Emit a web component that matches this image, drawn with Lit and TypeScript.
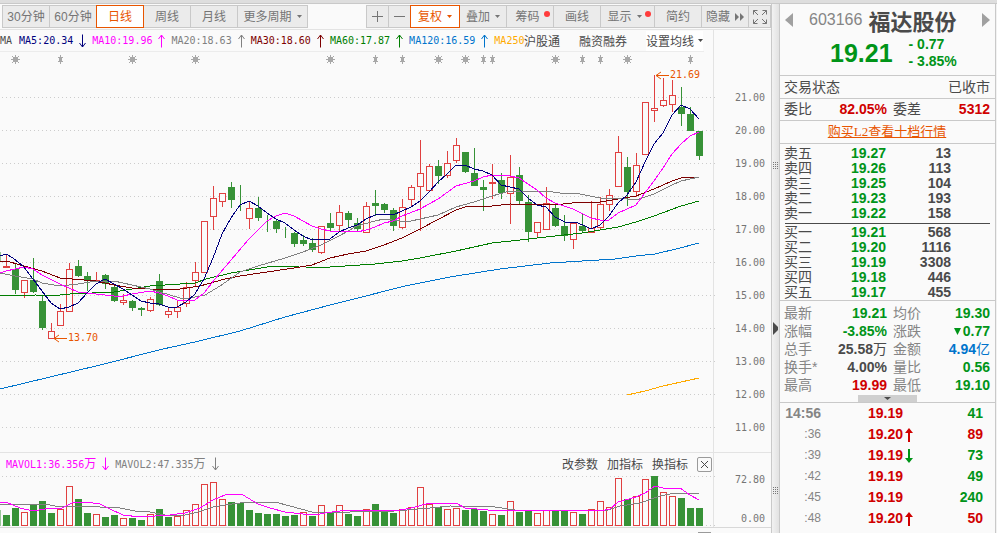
import { LitElement, html, svg, css } from "lit";
import { customElement } from "lit/decorators.js";
import { classMap } from "lit/directives/class-map.js";

type Bar = [string, number, number, number, number];

/* colour, high, body top, body bottom, low (one entry per trading day, 9 units apart) */
const BARS: Bar[] = [
  ["r", 255, 266, 268, 268], ["g", 264, 269, 290, 294], ["r", 280, 280, 293, 298], ["g", 258, 280, 292, 293],
  ["g", 296, 301, 328, 330], ["r", 323, 331, 339, 339], ["r", 304, 311, 326, 326], ["r", 263, 269, 312, 312],
  ["g", 260, 266, 276, 277], ["g", 272, 276, 281, 291], ["r", 272, 280, 282, 282], ["g", 274, 275, 284, 289],
  ["g", 286, 287, 301, 302], ["r", 294, 300, 303, 305], ["g", 300, 301, 308, 311], ["g", 307, 308, 310, 316],
  ["r", 297, 299, 311, 312], ["g", 274, 281, 305, 306], ["r", 307, 311, 315, 318], ["r", 301, 307, 312, 318],
  ["r", 282, 287, 304, 307], ["r", 262, 272, 281, 286], ["r", 221, 221, 273, 273], ["r", 186, 198, 217, 230],
  ["r", 193, 193, 202, 207], ["g", 182, 187, 200, 208], ["g", 185, 207, 208, 211], ["r", 202, 208, 219, 229],
  ["g", 197, 208, 218, 221], ["g", 215, 224, 225, 232], ["g", 220, 221, 229, 233], ["g", 227, 232, 233, 238],
  ["g", 232, 233, 244, 247], ["g", 235, 240, 244, 246], ["g", 238, 243, 250, 252], ["r", 226, 226, 253, 254],
  ["g", 213, 223, 228, 232], ["r", 205, 212, 226, 232], ["g", 211, 213, 220, 228], ["g", 218, 223, 229, 231],
  ["r", 202, 206, 233, 233], ["g", 190, 203, 206, 216], ["g", 203, 204, 210, 213], ["g", 208, 210, 226, 231],
  ["r", 199, 207, 228, 229], ["r", 185, 187, 200, 206], ["r", 140, 173, 187, 231], ["r", 164, 166, 191, 191],
  ["g", 160, 166, 176, 184], ["r", 151, 163, 176, 178], ["r", 138, 145, 161, 163], ["g", 152, 152, 172, 173],
  ["g", 148, 173, 186, 186], ["g", 180, 187, 190, 211], ["r", 164, 182, 183, 199], ["g", 173, 180, 193, 199],
  ["r", 155, 177, 194, 224], ["g", 167, 175, 201, 204], ["g", 195, 202, 232, 242], ["r", 222, 222, 233, 237],
  ["r", 187, 203, 230, 230], ["g", 205, 208, 226, 227], ["g", 215, 226, 236, 241], ["r", 223, 223, 240, 249],
  ["g", 214, 226, 231, 232], ["r", 201, 228, 233, 233], ["r", 197, 204, 228, 230], ["r", 189, 195, 205, 211],
  ["r", 136, 152, 187, 187], ["g", 157, 167, 192, 206], ["r", 153, 165, 192, 197], ["r", 102, 102, 155, 155],
  ["r", 75, 108, 111, 122], ["r", 78, 100, 106, 107], ["r", 80, 95, 105, 112], ["g", 87, 107, 114, 126],
  ["g", 107, 114, 131, 131], ["g", 131, 131, 156, 160],
];

const VOLUMES =
  "g515 g508 r512 g505 g501 g513 r509 r486 g499 g513 r514 g517 g515 r518 g518 g520 r514 g509 g517 r516 " +
  "r510 r504 r484 r482 r499 g502 g503 g510 g513 g514 g514 g516 g515 r512 g516 r505 g513 r505 g514 g516 " +
  "r509 g504 g511 g513 r509 r507 r487 r504 g507 r509 r508 g510 g509 g511 r514 g515 r501 g512 g511 r513 " +
  "r510 g511 g511 r512 g514 r509 r501 r507 r478 g499 r496 r479 g476 r492 r496 g498 g508 g508";

const AVERAGES: [string, string][] = [
  ["blue", "0,389 50,377 100,365 163,349 195,342 240,331 285,317 330,305 350,300 405,286 450,277 500,269 550,263 615,259 636,256 655,254 676,249 699,243"],
  ["green", "0,296 36,295 50,296 70,294 114,292 150,286 195,283 206,279 231,273 267,267 300,266 312,268 330,267 375,264 402,261 420,258 456,251 492,243 520,240 555,236 582,233 618,227 636,222 654,216 681,206 699,201"],
  ["maroon", "0,261 10,262 24,266 42,271 60,278 96,281 114,285 132,288 150,289 180,289 200,286 225,279 240,276 267,272 294,268 312,265 330,258 348,254 366,251 384,245 402,238 420,229 456,210 465,207 492,206 510,204 555,205 580,202 600,202 618,199 636,196 654,189 672,181 681,178 699,177"],
  ["gray", "0,273 15,276 33,279 42,283 60,286 78,284 96,281 114,281 132,285 150,289 160,292 180,298 190,298 205,295 220,286 230,279 240,272 258,266 285,258 303,252 321,245 339,236 357,226 375,221 384,219 400,221 411,221 420,219 438,215 447,211 456,207 474,202 492,196 510,191 546,191 560,193 580,194 600,198 618,198 636,200 654,194 672,185 681,181 699,177"],
  ["pink", "0,273 6,271 24,267 33,269 42,275 60,284 78,292 96,294 114,296 123,296 132,294 150,291 159,293 168,296 177,300 186,301 195,300 204,293 215,279 231,260 249,239 267,221 276,216 285,213 294,216 303,221 312,226 321,229 330,231 357,232 366,230 375,227 384,223 393,221 402,216 420,209 438,199 456,186 474,181 483,177 492,175 510,176 519,178 528,184 537,190 546,198 555,203 573,209 583,214 591,218 600,220 609,220 618,213 627,209 636,205 645,193 654,181 663,168 672,154 681,144 690,136 699,132"],
  ["navy", "0,256 6,254 13,258 24,267 33,279 42,291 51,303 60,309 69,307 78,303 87,293 96,284 105,279 114,284 123,289 132,295 141,301 150,303 159,304 168,307 177,307 186,302 195,294 204,279 213,258 222,234 231,218 240,205 249,201 258,206 267,213 276,219 285,223 294,230 303,236 312,240 330,239 339,232 348,228 357,225 366,219 375,215 384,214 393,215 402,211 411,207 420,201 429,192 438,182 447,174 456,165 465,165 474,169 483,171 492,175 501,185 510,187 519,189 528,198 537,205 546,207 555,217 567,223 575,222 583,225 591,229 600,225 609,216 618,203 627,195 636,182 645,162 654,144 663,133 672,115 681,105 690,109 699,119"],
  ["orange", "627,395 645,391 663,386 681,382 699,378"],
];

const VOLUME_AVERAGES: [string, string][] = [
  ["gray", "0,505 20,504 50,505 60,507 85,506 100,507 120,508 135,511 150,512 165,515 185,515 198,512 213,507 225,505 240,503 258,502 275,502 290,506 312,512 350,512 395,511 430,508 450,506 495,507 515,510 590,511 608,510 620,506 640,503 660,496 675,493 699,493"],
  ["pink", "0,502 8,503 20,508 33,511 45,509 62,508 72,503 85,502 100,504 110,509 123,515 140,517 155,516 170,515 185,513 200,508 213,500 225,495 235,494 243,495 258,504 270,508 285,512 303,514 315,515 325,513 340,511 363,510 395,511 411,508 430,503 456,503 465,508 500,511 520,510 560,510 600,511 610,509 618,502 636,497 645,493 655,486 663,488 680,488 690,495 699,500"],
];

const STARS = [15, 132, 195, 330, 438, 465, 555, 627];
const PAIRS = [60, 375, 402, 483, 492, 582, 600, 690];
const centre = (i: number) => 6 + i * 9;

const arrow = (up: boolean) => html`<svg class="arrow" viewBox="0 0 9 14" width="9" height="14" aria-hidden="true">
  <path d=${up ? "M4.5 13.5V1M4.5 1L1.5 5M4.5 1L7.5 5" : "M4.5 .5V13M4.5 13L1.5 9M4.5 13L7.5 9"} />
</svg>`;

const caret = html`<svg class="caret" viewBox="0 0 5 3" width="5" height="3" aria-hidden="true"><path d="M0 0H5L2.5 3Z" /></svg>`;

@customElement("kline-toolbar")
class KlineToolbar extends LitElement {
  static styles = css`
    :host { display: flex; justify-content: space-between; height: 24px; padding: 1px 0 0 3px;
      border-bottom: 1px solid #e3e3e3; background: #fafafa; }
    .group { display: flex; }
    .tool { box-sizing: border-box; height: 23px; width: 48px; margin: 0 0 0 -1px; padding: 0; border: 1px solid #c9c9c9;
      background: #ebebeb; color: #757575; font: 12px/20px "Liberation Sans", "Noto Sans CJK SC", sans-serif;
      display: flex; align-items: center; justify-content: center; gap: 5px; white-space: nowrap; position: relative; }
    .active { border-color: #e85500; background: #fff; color: #e85500; z-index: 1; }
    .narrow { width: 23px; }
    .medium { width: 50px; }
    .wide { width: 55px; }
    .menu { width: 71px; }
    .caret, .solid { fill: currentColor; }
    .line { fill: none; stroke: currentColor; }
    .dot { position: absolute; right: 3px; top: 5px; width: 6px; height: 6px; border-radius: 3px; background: #ff3c3c; }
    .wide { padding-right: 6px; }
  `;
  tool(label: unknown, extra = "", opts: { active?: boolean; caret?: boolean; dot?: boolean } = {}) {
    return html`<button class=${classMap({ tool: true, active: !!opts.active, [extra || "plain"]: true })}>
      ${label}${opts.caret ? caret : ""}${opts.dot ? html`<span class="dot"></span>` : ""}
    </button>`;
  }
  render() {
    const plus = html`<svg class="line" viewBox="0 0 11 11" width="11" height="11" role="img" aria-label="+"><path d="M0 5.5H11M5.5 0V11" /></svg>`;
    const minus = html`<svg class="line" viewBox="0 0 11 11" width="11" height="11" role="img" aria-label="-"><path d="M0 5.5H11" /></svg>`;
    const forward = html`<svg class="solid" viewBox="0 0 9 8" width="9" height="8" aria-hidden="true"><path d="M0 0L4 4L0 8ZM5 0L9 4L5 8Z" /></svg>`;
    const expand = html`<svg class="line" viewBox="0 0 14 14" width="14" height="14" role="img" aria-label="expand">
      <path d="M.5 4.5V.5H4.5M9.5 .5H13.5V4.5M13.5 9.5V13.5H9.5M4.5 13.5H.5V9.5M.5 .5L5 5M13.5 .5L9 5M13.5 13.5L9 9M.5 13.5L5 9" /></svg>`;
    return html`
      <div class="group">
        ${this.tool("30分钟")}${this.tool("60分钟")}${this.tool("日线", "", { active: true })}
        ${this.tool("周线")}${this.tool("月线")}${this.tool("更多周期", "menu", { caret: true })}
      </div>
      <div class="group">
        ${this.tool(plus, "narrow")}${this.tool(minus, "narrow")}
        ${this.tool("复权", "medium", { active: true, caret: true })}${this.tool("叠加", "", { caret: true })}
        ${this.tool("筹码", "", { dot: true })}${this.tool("画线")}
        ${this.tool("显示", "wide", { caret: true, dot: true })}${this.tool("简约")}
        ${this.tool(html`隐藏${forward}`)}${this.tool(expand, "narrow")}
      </div>`;
  }
}

@customElement("kline-chart")
class KlineChart extends LitElement {
  static styles = css`
    :host { display: block; background: #fafafa; font: 12px/20px "DejaVu Sans Mono", "Noto Sans CJK SC", monospace; color: #4a4a4a; }
    .row { display: grid; grid-template-columns: minmax(0, 1fr) 58px; height: 22px; }
    .row::after { content: ""; border-left: 1px solid #e3e3e3; }
    .legend { display: flex; align-items: center; border-bottom: 1px solid #ececec; margin-right: 9px; }
    .list { display: flex; flex: 1; align-items: center; gap: 5px; min-width: 0; overflow: hidden; white-space: nowrap; }
    .mono { font-size: 10px; flex: none; }
    .lead { margin-right: 2px; }
    .han { font-size: 12px; }
    .volume { padding-left: 6px; margin-right: 1px; display: flex; align-items: center; }
    .links { display: flex; gap: 19px; align-items: center; font-family: "Noto Sans CJK SC", sans-serif; }
    .legend .links { padding-right: 1px; }
    .volume .links { gap: 9px; }
    .links a { color: #4a4a4a; text-decoration: none; white-space: nowrap; }
    .links .setting { display: flex; align-items: center; gap: 4px; background: #fff; }
    .caret { fill: #4a4a4a; }
    .arrow { display: block; fill: none; stroke: currentColor; }
    .close { width: 15px; height: 15px; padding: 0; border: 1px solid #9a9a9a; border-radius: 2px; background: #fafafa;
      box-sizing: border-box; display: flex; align-items: center; justify-content: center; }
    .close path { stroke: #4a4a4a; fill: none; }
    .plot { display: block; width: 100%; height: auto; }
    .split { border-top: 1px solid #e3e3e3; }
    .tabs { display: flex; justify-content: flex-end; height: 5px; border-top: 1px solid #d8d8d8; padding-right: 60px; }
    .tab { width: 13px; margin-top: 4px; border-top: 1px solid #9a9a9a; }
    .grid { stroke: #cccccc; stroke-dasharray: 1 3; }
    .edge { stroke: #e3e3e3; }
    .r { stroke: #e04040; fill: #fafafa; }
    .g { stroke: #379237; fill: #379237; }
    .ma { fill: none; shape-rendering: crispEdges; }
    .sblue { stroke: #0074cc; } .sgreen { stroke: #007d00; } .smaroon { stroke: #7d0000; } .sgray { stroke: #808080; }
    .spink { stroke: #ff00ff; } .snavy { stroke: #00007d; } .sorange { stroke: #ffaa00; }
    .blue { color: #0074cc; } .green { color: #007d00; } .maroon { color: #7d0000; } .gray { color: #808080; }
    .pink { color: #ff00ff; } .navy { color: #00007d; } .orange { color: #ffaa00; }
    .axis { font-size: 10px; fill: #757575; }
    .note { font-size: 10px; fill: #e85500; }
    .pointer { stroke: #e85500; fill: none; }
    .mark { stroke: #a8a8a8; fill: #a8a8a8; }
  `;
  average([name, points]: [string, string]) {
    return svg`<polyline class="ma s${name}" points=${points} />`;
  }
  candle([tone, high, top, bottom, low]: Bar, i: number) {
    const x = centre(i);
    const height = Math.max(bottom - top - 1, tone === "r" ? 1 : 0);
    return svg`<g class=${tone}><path d="M${x + 0.5} ${high}V${low}" />
      <rect x=${x - 2.5} y=${top + 0.5} width="6" height=${height} /></g>`;
  }
  volume(entry: string, i: number) {
    const top = Number(entry.slice(1));
    return svg`<rect class=${entry[0]} x=${centre(i) - 2.5} y=${top + 0.5} width="6" height=${525 - top} />`;
  }
  render() {
    const levels = Array.from({ length: 11 }, (_, i) => ({ y: 97 + i * 33, label: (21 - i).toFixed(2) }));
    const legend: [string, string, boolean][] = [
      ["navy", "MA5:20.34", false], ["pink", "MA10:19.96", true], ["gray", "MA20:18.63", true],
      ["maroon", "MA30:18.60", true], ["green", "MA60:17.87", true], ["blue", "MA120:16.59", true],
    ];
    return html`
      <div class="row">
        <div class="legend">
          <div class="list">
            <span class="mono lead">MA</span>
            ${legend.map(([c, t, up]) => html`<span class="mono ${c}">${t}</span><span class="mono ${c}">${arrow(up)}</span>`)}
            <span class="mono orange">MA250</span>
          </div>
          <nav class="links">
            <a href="#hgt">沪股通</a><a href="#margin">融资融券</a><a class="setting" href="#ma">设置均线${caret}</a>
          </nav>
        </div>
      </div>
      <svg class="plot" viewBox="0 52 771 400" role="img" aria-label="K">
        ${levels.map((l) => svg`<path class="grid" d="M2 ${l.y + 0.5}H716" />
          <text class="axis" x="735" y=${l.y + 4}>${l.label}</text>`)}
        <path class="edge" d="M713.5 52V452" />
        ${STARS.map((x) => svg`<g class="mark"><rect x=${x - 1.5} y="57.5" width="4" height="4" />
          <path d="M${x + 0.5} 55V64M${x - 4} 59.5H${x + 5}M${x - 3} 56L${x + 4} 63M${x + 4} 56L${x - 3} 63" /></g>`)}
        ${PAIRS.map((x) => svg`<g class="mark"><rect x=${x - 0.5} y="57.5" width="2" height="4" />
          <path d="M${x + 0.5} 55V64M${x - 2} 57.5H${x + 3}M${x - 2} 61.5H${x + 3}" /></g>`)}
        <rect class="g" x="-2" y="252.5" width="2" height="8" />
        ${BARS.map((b, i) => this.candle(b, i))}
        ${AVERAGES.map((a) => this.average(a))}
        <path class="pointer" d="M54 338.5H67M54 338.5L59 335M54 338.5L59 342M656 75.5H669M656 75.5L661 72M656 75.5L661 79" />
        <text class="note" x="68" y="341">13.70</text>
        <text class="note" x="670" y="78">21.69</text>
      </svg>
      <div class="row split">
        <div class="volume">
          <div class="list">
            <span class="mono pink">MAVOL1:36.356<span class="han">万</span></span><span class="pink mono">${arrow(false)}</span>
            <span class="mono gray">MAVOL2:47.335<span class="han">万</span></span><span class="gray mono">${arrow(false)}</span>
          </div>
          <nav class="links">
            <a href="#edit">改参数</a><a href="#add">加指标</a><a href="#swap">换指标</a>
            <button class="close" aria-label="close"><svg viewBox="0 0 9 9" width="9" height="9"><path d="M1 1L8 8M8 1L1 8" /></svg></button>
          </nav>
        </div>
      </div>
      <svg class="plot" viewBox="0 475 771 52" role="img" aria-label="VOL">
        <path class="grid" d="M2 476.5H716M2 525.5H716" />
        <path class="edge" d="M713.5 475V527" />
        <rect class="g" x="-2" y="510.5" width="2" height="15" />
        ${VOLUMES.split(" ").map((v, i) => this.volume(v, i))}
        ${VOLUME_AVERAGES.map((a) => this.average(a))}
        <text class="axis" x="735" y="483">72.80</text>
        <text class="axis" x="741" y="522">0.00</text>
      </svg>
      <div class="tabs"><span class="tab"></span></div>`;
  }
}

@customElement("quote-panel")
class QuotePanel extends LitElement {
  static styles = css`
    :host { display: block; border: solid #c9c9c9; border-width: 0 1px; background: #fafafa; color: #4a4a4a;
      font: 14px/15px "Liberation Sans", "Noto Sans CJK SC", sans-serif; }
    .head { display: grid; grid-template-columns: 24px 1fr 24px; align-items: center; padding: 0 5px; height: 32px; }
    .step { border: 0; padding: 0; background: none; display: flex; fill: #a0a0a0; }
    .step:last-child { justify-content: flex-end; }
    .name { display: flex; gap: 6px; align-items: center; white-space: nowrap; }
    .code { font-size: 16px; line-height: 24px; color: #858585; }
    .title { font-size: 22px; line-height: 26px; font-weight: 700; font-family: "Noto Sans CJK SC", sans-serif; }
    .price { box-sizing: border-box; display: flex; gap: 16px; align-items: center; height: 39px; padding: 0 0 6px 50px; color: #009418; font-weight: 700; }
    .last { font-size: 25px; line-height: 32px; }
    .change { line-height: 17px; }
    .line { display: flex; align-items: center; justify-content: space-between; height: 22px; padding: 0 5px 0 4px; border-top: 1px solid #c9c9c9; }
    .promo { justify-content: center; font: 13px/20px "Liberation Serif", "Noto Sans CJK SC", serif; }
    .promo a { color: #e85500; }
    .table { table-layout: fixed; border-collapse: collapse; width: 100%; }
    .table th, .table td { padding: 0; text-align: right; font-weight: 700; white-space: nowrap; overflow: visible; }
    .table th { text-align: left; padding-left: 4px; font-weight: 400; }
    .sum { border-top: 1px solid #c9c9c9; line-height: 21px; }
    .sum tr { height: 21px; }
    .book { padding: 2px 0 0; border-top: 1px solid #c9c9c9; }
    .book tr { height: 15px; }
    .rule { border: 0; border-top: 1px solid #4a4a4a; margin: 2px 5px 1px; }
    .c1 { width: 40px; } .c2 { width: 66px; } .c3 { width: 65px; }
    .stats { border-top: 1px solid #c9c9c9; padding-top: 3px; line-height: 18px; }
    .stats tr { height: 18px; }
    .stats th { color: #858585; }
    .table td + th { padding-left: 6px; }
    .stats td:last-child, .sum td:last-child { padding-right: 5px; }
    .s1 { width: 44px; } .s2 { width: 63px; } .s3 { width: 47px; }
    .handle { display: flex; align-items: center; justify-content: center; width: 59px; height: 7px; margin: 1px auto 0; padding: 0; border: 0; background: #cfcfcf; }
    .handle path { fill: #4a4a4a; }
    .ticks { border-top: 1px solid #c9c9c9; line-height: 21px; }
    .ticks tr { height: 21px; }
    .ticks td:first-child { color: #858585; font-size: 12px; font-weight: 400; }
    .ticks .hour td:first-child { font-size: 14px; font-weight: 700; }
    .t1 { width: 41px; } .t2 { width: 82px; } .t3 { width: 12px; } .t4 { width: 68px; }
    .shaft { display: block; margin-left: 2px; fill: currentColor; }
    .fall { fill: currentColor; margin-right: 2px; vertical-align: 1px; }
    .table .up { color: #d00000; }
    .table .down { color: #009418; }
    .table .money { color: #0074cc; }
    .unit { font-weight: 400; }
  `;
  shaft(up: boolean) {
    return html`<svg class="shaft" viewBox="0 0 8 14" width="8" height="14" role="img" aria-label=${up ? "up" : "down"}>
      <path d=${up ? "M4 0L8 5H5V14H3V5H0Z" : "M4 14L8 9H5V0H3V9H0Z"} /></svg>`;
  }
  book(rows: [string, string, string][]) {
    return html`<table class="table"><colgroup><col class="c1"><col class="c2"><col class="c3"><col></colgroup>
      ${rows.map(([l, p, n]) => html`<tr><th scope="row">${l}</th><td class="down">${p}</td><td>${n}</td><td></td></tr>`)}</table>`;
  }
  pairs(rows: [string, unknown, string, string, unknown, string][], extra = "") {
    return html`<table class="table ${extra}"><colgroup><col class="s1"><col class="s2"><col class="s3"><col></colgroup>
      ${rows.map(([a, b, bc, c, d, dc]) => html`<tr><th scope="row">${a}</th><td class=${bc}>${b}</td><th scope="row">${c}</th><td class=${dc}>${d}</td></tr>`)}
    </table>`;
  }
  render() {
    const unit = (t: string) => html`<span class="unit">${t}</span>`;
    const fall = html`<svg class="fall" viewBox="0 0 7 7" width="7" height="7" aria-hidden="true"><path d="M0 0H7L3.5 7Z" /></svg>`;
    const ticks: [string, string, boolean | null, string, string][] = [
      ["14:56", "19.19", null, "41", "down"], [":36", "19.20", true, "89", "up"], [":39", "19.19", false, "73", "down"],
      [":42", "19.19", null, "49", "down"], [":45", "19.19", null, "240", "down"], [":48", "19.20", true, "50", "up"],
    ];
    return html`
      <header class="head">
        <button class="step" aria-label="previous"><svg viewBox="0 0 8 14" width="8" height="14"><path d="M8 0V14L0 7Z" /></svg></button>
        <div class="name"><span class="code">603166</span><span class="title">福达股份</span></div>
        <button class="step" aria-label="next"><svg viewBox="0 0 8 14" width="8" height="14"><path d="M0 0V14L8 7Z" /></svg></button>
      </header>
      <div class="price"><span class="last">19.21</span><span class="change">- 0.77<br>- 3.85%</span></div>
      <div class="line"><span>交易状态</span><span>已收市</span></div>
      ${this.pairs([["委比", "82.05%", "up", "委差", "5312", "up"]], "sum")}
      <div class="line promo"><a href="#l2">购买L2查看十档行情</a></div>
      <section class="book">
        ${this.book([["卖五", "19.27", "13"], ["卖四", "19.26", "113"], ["卖三", "19.25", "104"], ["卖二", "19.23", "193"], ["卖一", "19.22", "158"]])}
        <hr class="rule">
        ${this.book([["买一", "19.21", "568"], ["买二", "19.20", "1116"], ["买三", "19.19", "3308"], ["买四", "19.18", "446"], ["买五", "19.17", "455"]])}
      </section>
      <section class="stats">
        ${this.pairs([
          ["最新", "19.21", "down", "均价", "19.30", "down"],
          ["涨幅", "-3.85%", "down", "涨跌", html`${fall}0.77`, "down"],
          ["总手", html`25.58${unit("万")}`, "", "金额", html`4.94${unit("亿")}`, "money"],
          ["换手*", "4.00%", "", "量比", "0.56", "down"],
          ["最高", "19.99", "up", "最低", "19.10", "down"],
        ])}
        <button class="handle" aria-label="more"><svg viewBox="0 0 7 3" width="7" height="3"><path d="M0 0H7L3.5 3Z" /></svg></button>
      </section>
      <section class="ticks">
        <table class="table"><colgroup><col class="t1"><col class="t2"><col class="t3"><col class="t4"><col></colgroup>
          ${ticks.map(([t, p, dir, n, c], i) => html`<tr class=${i === 0 ? "hour" : "second"}><td>${t}</td><td class="up">${p}</td>
            <td class=${dir ? "up" : "down"}>${dir === null ? "" : this.shaft(dir)}</td><td class=${c}>${n}</td><td></td></tr>`)}
        </table>
      </section>`;
  }
}

@customElement("app-root")
class AppRoot extends LitElement {
  static styles = css`
    :host { display: block; min-height: 100vh; background: #fafafa; overflow: hidden; }
    .bar { height: 4px; box-sizing: border-box; background: #dedede; border-bottom: 1px solid #c9c9c9; }
    .desk { display: grid; grid-template-columns: minmax(0, 1fr) 8px 217px 1px; min-height: calc(100vh - 4px); }
    .splitter { background: linear-gradient(90deg, #c9c9c9 1px, #f2f2f2 1px, #e2e2e2); display: flex; flex-direction: column;
      align-items: center; justify-content: space-between; padding: 158px 0 39px; box-sizing: border-box; }
    .grip { stroke: #777; stroke-dasharray: 1 1; display: block; }
    .fold { fill: #4a4a4a; display: block; }
    .gutter { background: #f2f2f2; }
  `;
  render() {
    const grip = html`<svg class="grip" viewBox="0 0 5 7" width="5" height="7" aria-hidden="true">
      <path d="M0 .5H5M0 2.5H5M0 4.5H5M0 6.5H5" /></svg>`;
    return html`
      <div class="bar"></div>
      <main class="desk">
        <div class="market"><kline-toolbar></kline-toolbar><kline-chart></kline-chart></div>
        <div class="splitter">${grip}
          <svg class="fold" viewBox="0 0 5 13" width="5" height="13" aria-hidden="true"><path d="M0 0L5 5V8L0 13Z" /></svg>${grip}</div>
        <quote-panel></quote-panel>
        <div class="gutter"></div>
      </main>`;
  }
}
